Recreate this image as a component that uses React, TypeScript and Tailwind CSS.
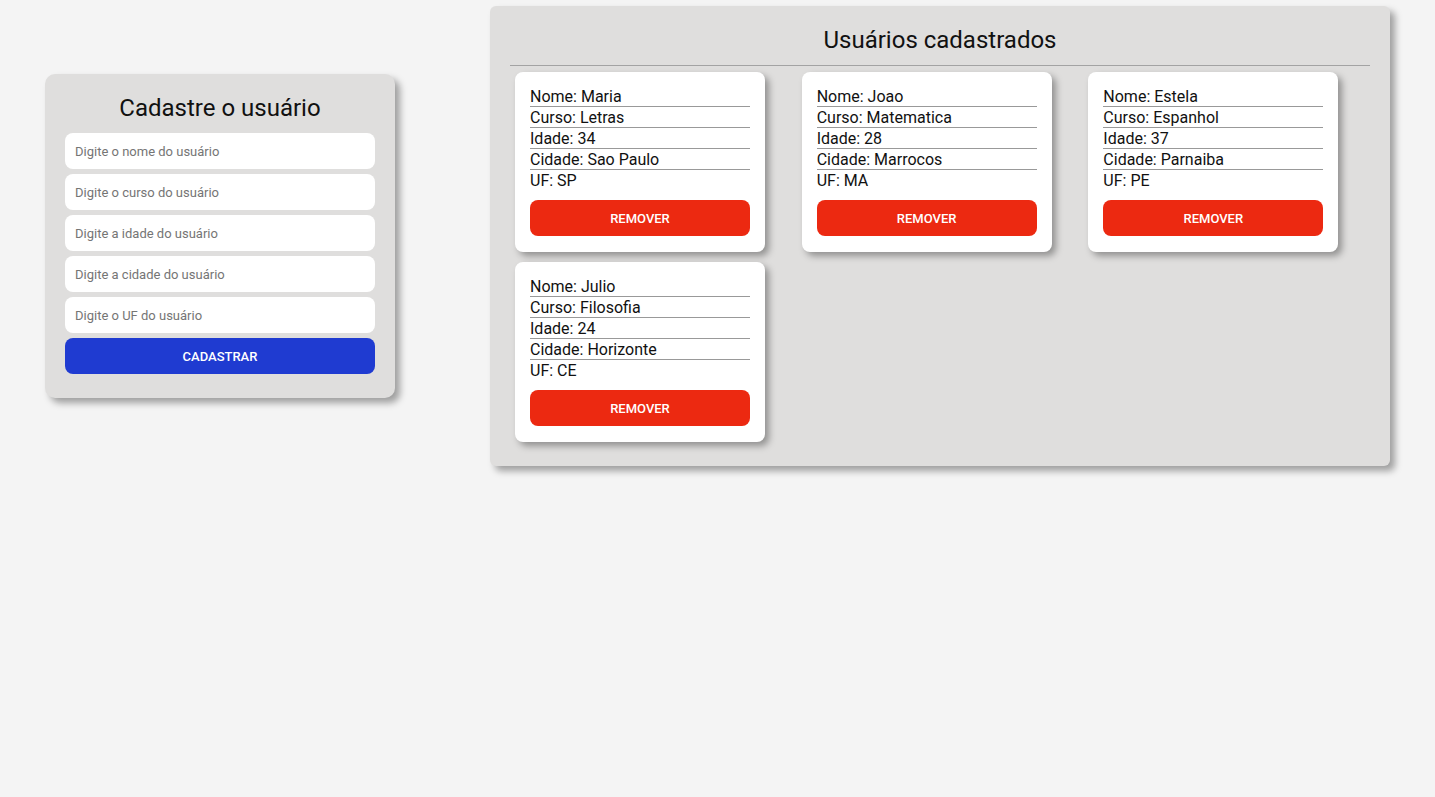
import React from "react";

type Usuario = {
    nome: string;
    curso: string;
    idade: number;
    cidade: string;
    uf: string;
};

const usuarios: Usuario[] = [
    { nome: "Maria", curso: "Letras", idade: 34, cidade: "Sao Paulo", uf: "SP" },
    { nome: "Joao", curso: "Matematica", idade: 28, cidade: "Marrocos", uf: "MA" },
    { nome: "Estela", curso: "Espanhol", idade: 37, cidade: "Parnaiba", uf: "PE" },
    { nome: "Julio", curso: "Filosofia", idade: 24, cidade: "Horizonte", uf: "CE" },
];

const placeholders = [
    "Digite o nome do usuário",
    "Digite o curso do usuário",
    "Digite a idade do usuário",
    "Digite a cidade do usuário",
    "Digite o UF do usuário",
];

const Linha: React.FC<{ children: React.ReactNode; last?: boolean }> = ({ children, last }) => (
    <p className={`h-[21px] text-[16px] leading-[22px] ${last ? "" : "border-b border-[#999]"}`}>
        {children}
    </p>
);

const CardUsuario: React.FC<{ usuario: Usuario }> = ({ usuario }) => (
    <div className="m-[5px] w-[250px] rounded-lg bg-white px-[15px] pt-[14px] pb-[16px] shadow-[4px_4px_7px_rgba(0,0,0,0.35)]">
        <Linha>Nome: {usuario.nome}</Linha>
        <Linha>Curso: {usuario.curso}</Linha>
        <Linha>Idade: {usuario.idade}</Linha>
        <Linha>Cidade: {usuario.cidade}</Linha>
        <Linha last>UF: {usuario.uf}</Linha>
        <button className="mt-[9px] h-9 w-full rounded-lg bg-[#ec2911] pt-px text-[13px] font-medium text-white">
            REMOVER
        </button>
    </div>
);

export default function App() {
    return (
        <div
            className="min-h-[797px] bg-[#f4f4f4] text-[#111]"
            style={{ fontFamily: "Roboto, 'Liberation Sans', sans-serif" }}
        >
            <div className="flex items-start justify-between px-[45px]">
                <form className="mt-[74px] w-[350px] rounded-[10px] bg-[#dfdedd] px-5 pt-[18px] pb-6 shadow-[5px_5px_7px_rgba(0,0,0,0.35)]">
                    <h2 className="mb-[9px] text-center text-[24px] leading-[32px]">Cadastre o usuário</h2>
                    <div className="flex flex-col gap-[5px]">
                        {placeholders.map((p) => (
                            <input
                                key={p}
                                placeholder={p}
                                className="h-9 w-full rounded-lg bg-white px-[10px] text-[13px] outline-none placeholder:text-[#757575]"
                            />
                        ))}
                        <button
                            type="button"
                            className="h-9 w-full rounded-lg bg-[#1f3bd1] pt-px text-[13px] font-medium text-white"
                        >
                            CADASTRAR
                        </button>
                    </div>
                </form>

                <section className="mt-[6px] w-[900px] rounded-md bg-[#dfdedd] px-5 pt-[18px] pb-[19px] shadow-[5px_5px_7px_rgba(0,0,0,0.35)]">
                    <h2 className="text-center text-[24px] leading-[32px]">Usuários cadastrados</h2>
                    <hr className="mt-[9px] mb-[1px] border-t border-[#a3a3a3]" />
                    <div className="grid grid-cols-3">
                        {usuarios.map((u) => (
                            <CardUsuario key={u.nome} usuario={u} />
                        ))}
                    </div>
                </section>
            </div>
        </div>
    );
}
